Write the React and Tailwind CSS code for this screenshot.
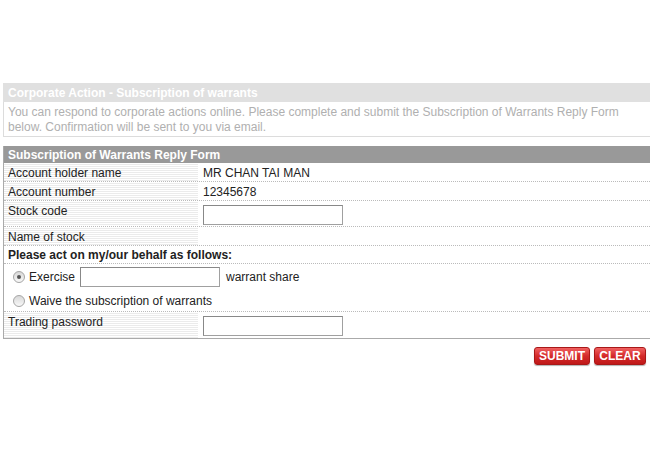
import React from "react";

const stripe =
  "bg-[image:repeating-linear-gradient(to_bottom,#ffffff_0px,#ffffff_1px,#ebebeb_1px,#ebebeb_2px)]";

function Radio({ checked }) {
  return (
    <span className="inline-flex items-center justify-center w-[12px] h-[12px] rounded-full border border-[#a5a5a5] bg-[image:linear-gradient(to_bottom,#d8d8d8,#f8f8f8)] shrink-0">
      {checked ? <span className="w-[4px] h-[4px] rounded-full bg-[#555]" /> : null}
    </span>
  );
}

function Input({ className = "" }) {
  return (
    <div
      className={
        "h-[20px] w-[140px] bg-white border border-[#a0a0a0] border-t-[#888] border-l-[#888] " +
        className
      }
    />
  );
}

export default function App() {
  return (
    <div className="w-[650px] h-[462px] overflow-hidden bg-white font-['Liberation_Sans',Arial,sans-serif] text-[12px] text-[#222] pt-[83px]">
      <div className="ml-[3px]">
        <div className="h-[19px] bg-[#e0e0e0] text-white font-bold pl-[5px] pt-[1px] leading-[19px]">
          Corporate Action - Subscription of warrants
        </div>
        <div className="border-l border-b border-[#dcdcdc] text-[#b0b0b0] leading-[15px] pl-[4px] pt-[3px] pb-[1px]">
          You can respond to corporate actions online. Please complete and submit the Subscription of Warrants Reply Form
          <br />
          below. Confirmation will be sent to you via email.
        </div>
      </div>

      <div className="ml-[3px] mt-[9px] border-l border-b border-[#aaaaaa]">
        <div className="h-[17px] bg-[#999999] text-white font-bold pl-[4px] pt-[1px] leading-[17px]">
          Subscription of Warrants Reply Form
        </div>

        <div className="flex h-[19px] border-b border-dotted border-[#bbbbbb]">
          <div className={"w-[194px] pl-[4px] pt-[3px] leading-[14px] " + stripe}>Account holder name</div>
          <div className="pl-[5px] pt-[3px] leading-[14px]">MR CHAN TAI MAN</div>
        </div>
        <div className="flex h-[19px] border-b border-dotted border-[#bbbbbb]">
          <div className={"w-[194px] pl-[4px] pt-[3px] leading-[14px] " + stripe}>Account number</div>
          <div className="pl-[5px] pt-[3px] leading-[14px]">12345678</div>
        </div>
        <div className="flex h-[26px] border-b border-dotted border-[#bbbbbb]">
          <div className={"w-[194px] pl-[4px] pt-[3px] leading-[14px] " + stripe}>Stock code</div>
          <div className="pl-[5px] pt-[4px]">
            <Input />
          </div>
        </div>
        <div className="flex h-[19px] border-b border-dotted border-[#bbbbbb]">
          <div className={"w-[194px] pl-[4px] pt-[3px] leading-[14px] " + stripe}>Name of stock</div>
          <div className="pl-[5px] pt-[3px] leading-[14px]"></div>
        </div>
        <div className="h-[18px] border-b border-dotted border-[#bbbbbb] pl-[4px] pt-[2px] leading-[14px] font-bold">
          Please act on my/our behalf as follows:
        </div>
        <div className="h-[48px] border-b border-dotted border-[#bbbbbb]">
          <div className="flex items-center h-[25px] pl-[9px] pt-[1px]">
            <Radio checked />
            <span className="ml-[4px]">Exercise</span>
            <Input className="ml-[5px]" />
            <span className="ml-[6px]">warrant share</span>
          </div>
          <div className="flex items-center h-[22px] pl-[9px] pt-[1px]">
            <Radio />
            <span className="ml-[4px]">Waive the subscription of warrants</span>
          </div>
        </div>
        <div className="flex h-[26px]">
          <div className={"w-[194px] pl-[4px] pt-[3px] leading-[14px] " + stripe}>Trading password</div>
          <div className="pl-[5px] pt-[4px]">
            <Input />
          </div>
        </div>
      </div>

      <div className="flex justify-end gap-[4px] pr-[4px] mt-[8px]">
        <button className="w-[56px] h-[18px] rounded-[3px] border border-[#a81818] bg-[image:linear-gradient(to_bottom,#f06060,#d42a2a_50%,#c01818)] text-white font-bold text-[12px] leading-[16px] shadow-[0_1px_1px_rgba(0,0,0,0.3)]">
          SUBMIT
        </button>
        <button className="w-[52px] h-[18px] rounded-[3px] border border-[#a81818] bg-[image:linear-gradient(to_bottom,#f06060,#d42a2a_50%,#c01818)] text-white font-bold text-[12px] leading-[16px] shadow-[0_1px_1px_rgba(0,0,0,0.3)]">
          CLEAR
        </button>
      </div>
    </div>
  );
}
